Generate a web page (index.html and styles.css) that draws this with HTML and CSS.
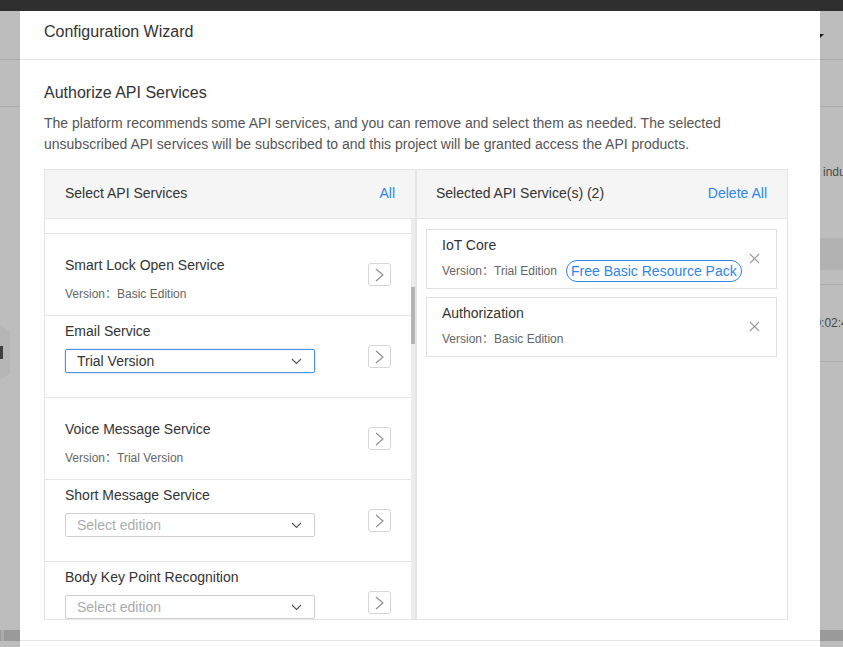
FILE: index.html
```html
<!DOCTYPE html>
<html lang="en">
<head>
<meta charset="utf-8">
<title>Configuration Wizard</title>
<link rel="stylesheet" href="styles.css">
</head>
<body>
<div class="page">
  <div class="topbar"></div>
  <div class="nav"><span class="caret"></span></div>
  <div class="subnav"></div>
  <div class="content">
    <div class="intro">industry</div>
    <div class="table-head"></div>
    <div class="table-gap"></div>
    <div class="table-row">2024-05-16 10:02:48</div>
  </div>
  <div class="hscroll"><span class="hscroll-thumb"></span></div>
  <div class="handle"><span class="handle-bar"></span></div>
</div>

<div class="overlay"></div>

<div class="modal">
  <div class="modal-header">Configuration Wizard</div>
  <div class="modal-body">
    <h2 class="section-title">Authorize API Services</h2>
    <p class="section-desc">The platform recommends some API services, and you can remove and select them as needed. The selected unsubscribed API services will be subscribed to and this project will be granted access the API products.</p>

    <div class="transfer">
      <div class="panel">
        <div class="panel-head">
          <span>Select API Services</span>
          <a class="link">All</a>
        </div>
        <div class="panel-list">
          <div class="list">
            <div class="item-tail"></div>
            <div class="item item--version">
              <div class="item-main">
                <div class="item-title">Smart Lock Open Service</div>
                <div class="item-version">Version：Basic Edition</div>
              </div>
              <button class="move-btn"><svg width="9" height="14" viewBox="0 0 9 14"><polyline points="1,1 8,7 1,13" fill="none" stroke="#8c8c8c" stroke-width="1.1"/></svg></button>
            </div>
            <div class="item item--select">
              <div class="item-main">
                <div class="item-title">Email Service</div>
                <div class="select select--focus">
                  <span class="select-value">Trial Version</span>
                  <svg class="select-arrow" width="11" height="7" viewBox="0 0 11 7"><polyline points="1,1 5.5,5.5 10,1" fill="none" stroke="#555" stroke-width="1.1"/></svg>
                </div>
              </div>
              <button class="move-btn"><svg width="9" height="14" viewBox="0 0 9 14"><polyline points="1,1 8,7 1,13" fill="none" stroke="#8c8c8c" stroke-width="1.1"/></svg></button>
            </div>
            <div class="item item--version">
              <div class="item-main">
                <div class="item-title">Voice Message Service</div>
                <div class="item-version">Version：Trial Version</div>
              </div>
              <button class="move-btn"><svg width="9" height="14" viewBox="0 0 9 14"><polyline points="1,1 8,7 1,13" fill="none" stroke="#8c8c8c" stroke-width="1.1"/></svg></button>
            </div>
            <div class="item item--select">
              <div class="item-main">
                <div class="item-title">Short Message Service</div>
                <div class="select">
                  <span class="select-placeholder">Select edition</span>
                  <svg class="select-arrow" width="11" height="7" viewBox="0 0 11 7"><polyline points="1,1 5.5,5.5 10,1" fill="none" stroke="#555" stroke-width="1.1"/></svg>
                </div>
              </div>
              <button class="move-btn"><svg width="9" height="14" viewBox="0 0 9 14"><polyline points="1,1 8,7 1,13" fill="none" stroke="#8c8c8c" stroke-width="1.1"/></svg></button>
            </div>
            <div class="item item--select">
              <div class="item-main">
                <div class="item-title">Body Key Point Recognition</div>
                <div class="select">
                  <span class="select-placeholder">Select edition</span>
                  <svg class="select-arrow" width="11" height="7" viewBox="0 0 11 7"><polyline points="1,1 5.5,5.5 10,1" fill="none" stroke="#555" stroke-width="1.1"/></svg>
                </div>
              </div>
              <button class="move-btn"><svg width="9" height="14" viewBox="0 0 9 14"><polyline points="1,1 8,7 1,13" fill="none" stroke="#8c8c8c" stroke-width="1.1"/></svg></button>
            </div>
          </div>
          <div class="scrollbar"><div class="scroll-thumb"></div></div>
        </div>
      </div>

      <div class="panel">
        <div class="panel-head panel-head--right">
          <span>Selected API Service(s) (2)</span>
          <a class="link">Delete All</a>
        </div>
        <div class="panel-list panel-list--selected">
          <div class="card">
            <div class="card-main">
              <div class="card-title">IoT Core</div>
              <div class="card-row">
                <span class="card-version">Version：Trial Edition</span>
                <span class="pill">Free Basic Resource Pack</span>
              </div>
            </div>
            <svg class="close" width="11" height="11" viewBox="0 0 11 11"><path d="M1 1L10 10M10 1L1 10" stroke="#9a9a9a" stroke-width="1.1" fill="none"/></svg>
          </div>
          <div class="card">
            <div class="card-main">
              <div class="card-title">Authorization</div>
              <div class="card-row">
                <span class="card-version">Version：Basic Edition</span>
              </div>
            </div>
            <svg class="close" width="11" height="11" viewBox="0 0 11 11"><path d="M1 1L10 10M10 1L1 10" stroke="#9a9a9a" stroke-width="1.1" fill="none"/></svg>
          </div>
        </div>
      </div>
    </div>
  </div>
  <div class="modal-footer"></div>
</div>
</body>
</html>
```

FILE: styles.css
```css
* { box-sizing: border-box; }
html, body { margin: 0; padding: 0; }
body {
  width: 843px;
  height: 647px;
  overflow: hidden;
  background: #fff;
  font-family: "Liberation Sans", Arial, "Noto Sans CJK SC", sans-serif;
  color: #333;
}

/* ---------- background page ---------- */
.page {
  position: relative;
  height: 647px;
  display: flex;
  flex-direction: column;
}
.topbar { height: 11px; background: #404040; flex: none; }
.nav {
  height: 49px;
  flex: none;
  border-bottom: 1px solid #e6e6e6;
  display: flex;
  justify-content: flex-end;
  align-items: center;
  padding: 2px 19px 0 0;
}
.caret {
  width: 0; height: 0;
  border-left: 4px solid transparent;
  border-right: 4px solid transparent;
  border-top: 4px solid #222;
}
.subnav { height: 47px; flex: none; border-bottom: 1px solid #e6e6e6; }
.content { flex: none; margin-left: 700px; }
.intro {
  margin-top: 56px;
  padding-left: 123px;
  font-size: 12px;
  line-height: 18px;
  color: #646464;
  white-space: nowrap;
}
.table-head { margin-top: 57px; height: 32px; background: #f0f0f0; }
.table-gap { height: 15px; border-bottom: 1px solid #e6e6e6; }
.table-row {
  height: 77px;
  border-bottom: 1px solid #e6e6e6;
  padding-left: 43px;
  font-size: 12px;
  line-height: 76px;
  color: #646464;
  white-space: nowrap;
}
.hscroll {
  margin-top: auto;
  margin-bottom: 6px;
  height: 11px;
  background: #d0d0d0;
  display: flex;
}
.hscroll-thumb { width: 3px; margin-left: 1px; background: #e8e8e8; }
.handle {
  position: absolute;
  left: 0;
  top: 325px;
  width: 10px;
  height: 55px;
  background: #f6f6f6;
  clip-path: polygon(0 0, 100% 12%, 100% 88%, 0 100%);
  display: flex;
  align-items: center;
}
.handle-bar { width: 3px; height: 13px; background: #555; }

.overlay {
  position: fixed;
  inset: 0;
  background: rgba(0, 0, 0, 0.26);
}

/* ---------- modal ---------- */
.modal {
  position: fixed;
  left: 20px;
  top: 11px;
  width: 800px;
  height: 700px;
  background: #fff;
}
.modal-header {
  height: 49px;
  padding: 9px 24px 0;
  line-height: 24px;
  font-size: 16px;
  color: #333;
  border-bottom: 1px solid #e5e5e5;
}
.modal-body { padding: 21px 24px 20px; }
.section-title {
  margin: 0 0 7px;
  font-size: 16px;
  font-weight: normal;
  line-height: 24px;
  color: #333;
}
.section-desc {
  margin: 0 0 15px;
  padding-top: 1px;
  font-size: 14px;
  line-height: 21px;
  color: #555;
  height: 42px;
}
.modal-footer { border-top: 1px solid #e5e5e5; }

/* ---------- transfer ---------- */
.transfer {
  width: 744px;
  display: flex;
}
.panel {
  width: 372px;
  height: 451px;
  border: 1px solid #e5e5e5;
  display: flex;
  flex-direction: column;
}
.panel-head {
  height: 49px;
  flex: none;
  background: #f5f5f5;
  border-bottom: 1px solid #e5e5e5;
  padding: 0 20px 2px;
  display: flex;
  justify-content: space-between;
  align-items: center;
  font-size: 14px;
  color: #333;
}
.panel-head--right { padding-left: 19px; }
.link { color: #2f86e6; cursor: pointer; }

.panel-list {
  flex: 1;
  display: flex;
  overflow: hidden;
}
.list { flex: 1; overflow: hidden; }
.scrollbar {
  width: 4px;
  flex: none;
  background: #ececec;
  padding-top: 68px;
}
.scroll-thumb { height: 57px; background: #b3b3b3; }

/* bottom part of the item scrolled above the visible area */
.item-tail {
  height: 15px;
  border-bottom: 1px solid #e5e5e5;
}
.item {
  height: 82px;
  border-bottom: 1px solid #e5e5e5;
  padding: 0 20px;
  display: flex;
  align-items: flex-start;
}
.item--version { padding-top: 21px; }
.item--select { padding-top: 5px; }
.item-main { flex: 1; }
.item-title { font-size: 14px; line-height: 20px; color: #333; }
.item-version {
  margin-top: 10px;
  font-size: 12px;
  line-height: 18px;
  color: #666;
}
.move-btn {
  align-self: center;
  width: 23px;
  height: 23px;
  padding: 0;
  margin: 0;
  border: 1px solid #d6d6d6;
  border-radius: 3px;
  background: #fff;
  display: flex;
  align-items: center;
  justify-content: center;
}
.item--version .move-btn { margin-top: -21px; }
.item--select .move-btn { margin-top: -5px; }

.select {
  margin-top: 8px;
  width: 250px;
  height: 24px;
  border: 1px solid #cfcfcf;
  border-radius: 2px;
  padding: 0 12px 0 11px;
  display: flex;
  align-items: center;
  justify-content: space-between;
  font-size: 14px;
}
.select--focus {
  border-color: #4a92e3;
  box-shadow: 0 0 2px rgba(74, 146, 227, 0.6);
}
.select-value { color: #333; }
.select-placeholder { color: #ababab; }
.select-arrow { flex: none; }

/* ---------- selected cards ---------- */
.panel-list--selected {
  flex-direction: column;
  padding: 10px 10px 0 9px;
  gap: 8px;
}
.card {
  height: 60px;
  border: 1px solid #e0e0e0;
  padding: 5px 16px 6px 15px;
  display: flex;
  align-items: center;
}
.card-main { flex: 1; align-self: flex-start; }
.card-title { font-size: 14px; line-height: 20px; color: #333; }
.card-row {
  margin-top: 5px;
  height: 22px;
  display: flex;
  align-items: center;
}
.card-version { font-size: 12px; line-height: 18px; color: #666; }
.pill {
  margin-left: 9px;
  height: 22px;
  padding: 0 4px;
  border: 1px solid #2f86e6;
  border-radius: 11px;
  font-size: 14px;
  line-height: 20px;
  color: #2f86e6;
  white-space: nowrap;
}
.close { flex: none; }
```
